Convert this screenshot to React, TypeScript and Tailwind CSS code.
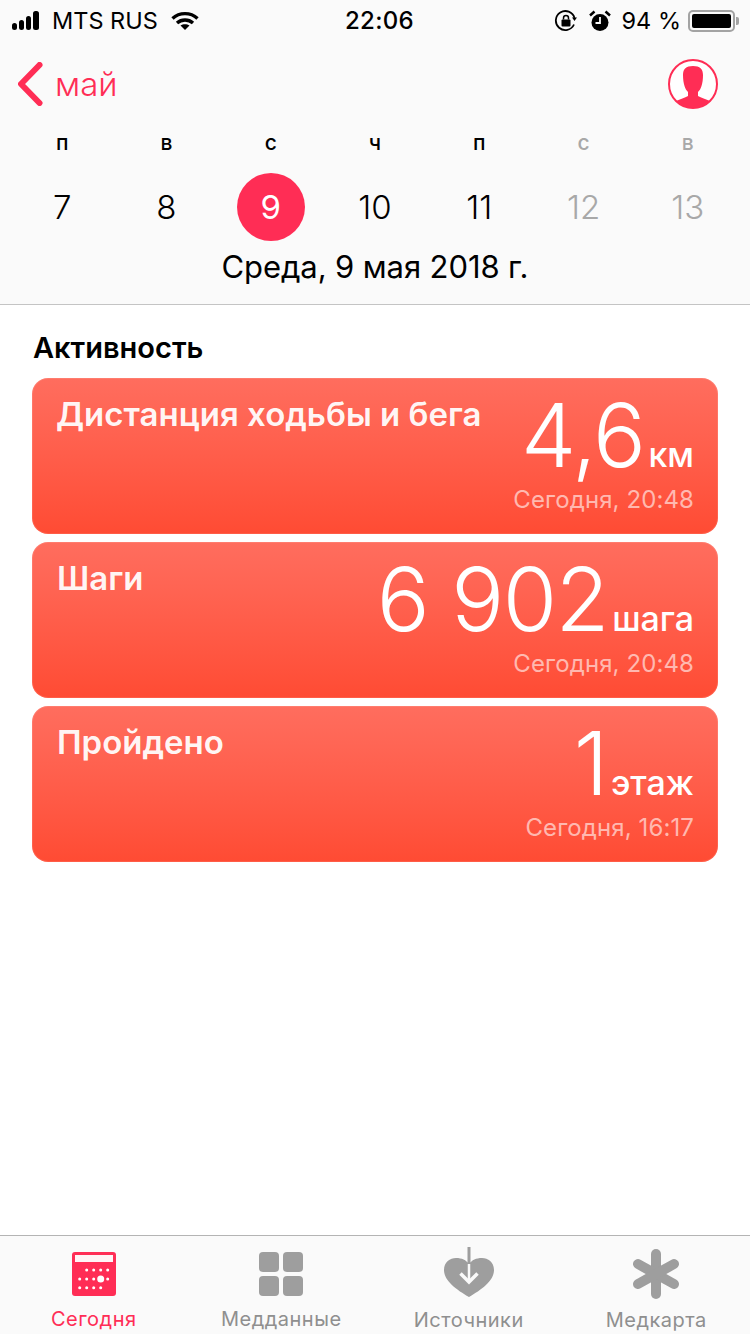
const FONT = "font-['Inter','Noto_Sans',sans-serif]";

const WEEK = [
  { day: 'п', date: '7' },
  { day: 'в', date: '8' },
  { day: 'с', date: '9', selected: true },
  { day: 'ч', date: '10' },
  { day: 'п', date: '11' },
  { day: 'с', date: '12', weekend: true },
  { day: 'в', date: '13', weekend: true },
];

const CARDS = [
  { title: 'Дистанция ходьбы и бега', value: '4,6', unit: 'км', time: 'Сегодня, 20:48', pad: 'pl-6' },
  { title: 'Шаги', value: '6 902', unit: 'шага', time: 'Сегодня, 20:48', pad: 'pl-[25px]' },
  { title: 'Пройдено', value: '1', unit: 'этаж', time: 'Сегодня, 16:17', pad: 'pl-[25px]' },
];

function StatusBar() {
  return (
    <div className="h-[42px] grid grid-cols-[1fr_auto_1fr] items-center pl-3 pr-[11px] text-black">
      <div className="flex items-center">
        <svg width="33" height="20" viewBox="0 0 33 20" fill="currentColor">
          <rect x="0" y="12" width="5" height="7" rx="2.5" />
          <rect x="7" y="9" width="5" height="10" rx="2.5" />
          <rect x="14" y="5" width="5" height="14" rx="2.5" />
          <rect x="21" y="0" width="6" height="19" rx="2.5" />
        </svg>
        <span className="text-[23.5px] ml-[7px] leading-none font-normal">MTS RUS</span>
        <svg className="ml-[13px]" width="28" height="20" viewBox="0 0 28 20" fill="none" stroke="currentColor" strokeWidth="3.4">
          <path d="M1.5 7.5C8.5 1 19.5 1 26.5 7.5" />
          <path d="M6 12C10.5 8 17.5 8 22 12" />
          <path d="M14 19l-4.5-4.5c2.5-1.8 6.5-1.8 9 0z" fill="currentColor" stroke="none" />
        </svg>
      </div>
      <span className="text-[24px] font-medium leading-none tracking-[0.3px] ml-2">22:06</span>
      <div className="flex items-center justify-end">
        <svg width="24" height="24" viewBox="0 0 24 24" fill="none" stroke="currentColor" strokeWidth="1.8">
          <path d="M20 15.5A9.5 9.5 0 1 1 20.5 9" />
          <path d="M18 8.5l5 0-2.5 3.5z" fill="currentColor" stroke="none" />
          <rect x="7.5" y="10.5" width="9" height="7" rx="1" fill="currentColor" stroke="none" />
          <path d="M9.5 10.5V9a2.5 2.5 0 0 1 5 0v1.5" strokeWidth="1.5" />
        </svg>
        <svg className="ml-[11px]" width="22" height="22" viewBox="0 0 22 22">
          <circle cx="11" cy="12.5" r="8.5" fill="currentColor" />
          <path d="M11 7v6H6.5" fill="none" stroke="#fafafa" strokeWidth="1.8" />
          <path d="M1 5.5L5.5 1.5M21 5.5L16.5 1.5" stroke="currentColor" strokeWidth="2.5" />
        </svg>
        <span className="text-[23.5px] ml-[11px] leading-none font-normal">94 %</span>
        <div className="ml-[7px] flex items-center">
          <div className="w-[47px] h-[22px] rounded-[5px] border-2 border-[#a3a3a3] p-[2px]">
            <div className="w-full h-full bg-black rounded-[2px]" />
          </div>
          <div className="w-[3px] h-[8px] bg-[#a3a3a3] rounded-r-[2px] ml-[1px]" />
        </div>
      </div>
    </div>
  );
}

function CalendarHeader() {
  return (
    <div className="h-[305px] bg-[#fafafa] border-b border-[#c4c4c4]">
      <StatusBar />
      <div className="flex items-center justify-between h-[52px] mt-4 pl-[18px] pr-8">
        <div className="flex items-center text-[#ff2d55]">
          <svg width="26" height="44" viewBox="0 0 26 44" fill="none" stroke="currentColor" strokeWidth="6" strokeLinecap="round" strokeLinejoin="round">
            <path d="M21.5 3L3 22l18.5 19" />
          </svg>
          <span className="text-[33px] leading-none ml-[11px] font-light">май</span>
        </div>
        <svg width="50" height="50" viewBox="0 0 50 50">
          <circle cx="25" cy="25" r="24" fill="#fff" stroke="#ff2d55" strokeWidth="2" />
          <clipPath id="avatar-clip"><circle cx="25" cy="25" r="24" /></clipPath>
          <path clipPath="url(#avatar-clip)" fill="#ff2d55" d="M25 7c-7 0-10 3-10 9 0 4 .5 8 1.5 11 .7 2.5 2 4.5 3.5 6v4c-3 2-8 3-12 5v8h34v-8c-4-2-9-3-12-5v-4c1.5-1.5 2.8-3.5 3.5-6 1-3 1.5-7 1.5-11 0-6-3-9-10-9z" />
        </svg>
      </div>
      <div className="grid grid-cols-7 px-[10px] mt-[19px]">
        {WEEK.map((d, i) => (
          <div key={i} className="flex flex-col items-center">
            <span className={`text-[21px] leading-[28px] font-medium ${d.weekend ? 'text-[#a8a8a8]' : 'text-black'}`}>{d.day}</span>
            <div className={`mt-4 pt-[2px] w-[68px] h-[68px] rounded-full flex items-center justify-center text-[33px] font-light ${d.selected ? 'bg-[#ff2d55] text-white font-normal' : d.weekend ? 'text-[#a8a8a8]' : 'text-black'}`}>
              {d.date}
            </div>
          </div>
        ))}
      </div>
      <div className="text-center text-[31px] leading-[38px] text-black font-normal tracking-[-0.1px] mt-[7px]">Среда, 9 мая 2018 г.</div>
    </div>
  );
}

function ActivityCard({ title, value, unit, time, pad }: typeof CARDS[number]) {
  return (
    <div className={`h-[156px] rounded-[16px] bg-gradient-to-b from-[#ff6d5e] to-[#ff4b33] ring-1 ring-inset ring-white/10 flex justify-between ${pad} pr-6`}>
      <span className="text-[33px] leading-[40px] font-semibold text-white/95 mt-4 whitespace-nowrap">{title}</span>
      <div className="flex flex-col items-end">
        <div className="flex items-baseline mt-[7px] text-white whitespace-nowrap">
          <span className="text-[88px] leading-[100px] font-light tracking-[-1.5px]">{value}</span>
          <span className="text-[34px] leading-none font-medium ml-1">{unit}</span>
        </div>
        <span className="text-[24px] leading-[30px] text-white/60 tracking-[0.1px] whitespace-nowrap">{time}</span>
      </div>
    </div>
  );
}

function TabBar() {
  const grey = '#9e9e9e';
  return (
    <div className="h-[99px] bg-[#fafafa] border-t border-[#b4b4b4] grid grid-cols-4">
      <div className="flex flex-col items-center">
        <svg className="mt-[16px]" width="44" height="44" viewBox="0 0 44 44" fill="#fff">
          <rect width="44" height="44" rx="3" fill="#ff2d55" />
          <rect x="3" y="3" width="38" height="7" opacity="0.95" />
          {[14.7, 21.7, 28.7, 35.7].map(x => (
            <circle key={x} cx={x} cy="18" r="1.5" />
          ))}
          {[7.7, 14.7, 21.7, 35.7].map(x => (
            <circle key={x} cx={x} cy="27" r="1.5" />
          ))}
          <circle cx="28.7" cy="27" r="3.5" />
          {[7.7, 14.7, 21.7, 28.7].map(x => (
            <circle key={x} cx={x} cy="35.7" r="1.5" />
          ))}
        </svg>
        <span className="text-[20px] leading-none mt-[13px] text-[#ff2d55] tracking-[0.5px]">Сегодня</span>
      </div>
      <div className="flex flex-col items-center">
        <svg className="mt-[16px]" width="44" height="44" viewBox="0 0 44 44" fill={grey}>
          <rect x="0" y="0" width="20" height="20" rx="4" />
          <rect x="24" y="0" width="20" height="20" rx="4" />
          <rect x="0" y="24" width="20" height="20" rx="4" />
          <rect x="24" y="24" width="20" height="20" rx="4" />
        </svg>
        <span className="text-[20px] leading-none mt-[13px] text-[#8f8f8f] tracking-[0.5px]">Медданные</span>
      </div>
      <div className="flex flex-col items-center">
        <svg className="mt-[11px]" width="52" height="50" viewBox="0 0 52 50" fill="none">
          <path fill={grey} d="M26 50C14 43 1 34 1 23 1 15 7 11 13 11c6 0 10 2 13 6 3-4 7-6 13-6 6 0 12 4 12 12 0 11-13 20-25 27z" />
          <path d="M26 0v18" stroke={grey} strokeWidth="3" />
          <path d="M26 17v18" stroke="#fafafa" strokeWidth="2.5" />
          <path d="M17.5 26.5L26 35l8.5-8.5" stroke="#fafafa" strokeWidth="3.5" />
        </svg>
        <span className="text-[20px] leading-none mt-[13px] text-[#8f8f8f] tracking-[0.5px]">Источники</span>
      </div>
      <div className="flex flex-col items-center">
        <svg className="mt-[13px]" width="50" height="50" viewBox="0 0 50 50" stroke={grey} strokeWidth="10" strokeLinecap="round">
          <path d="M25 5v40" />
          <path d="M7 15l36 20" />
          <path d="M43 15L7 35" />
        </svg>
        <span className="text-[20px] leading-none mt-[11px] text-[#8f8f8f] tracking-[0.5px]">Медкарта</span>
      </div>
    </div>
  );
}

export default function App() {
  return (
    <div className={`${FONT} w-[750px] h-[1334px] bg-white flex flex-col overflow-hidden`}>
      <CalendarHeader />
      <div className="flex-1 px-8">
        <h2 className="text-[29px] leading-[34px] font-semibold text-black mt-[26px] ml-[1px]">Активность</h2>
        <div className="flex flex-col gap-2 mt-[13px]">
          {CARDS.map(c => (
            <ActivityCard key={c.title} {...c} />
          ))}
        </div>
      </div>
      <TabBar />
    </div>
  );
}
